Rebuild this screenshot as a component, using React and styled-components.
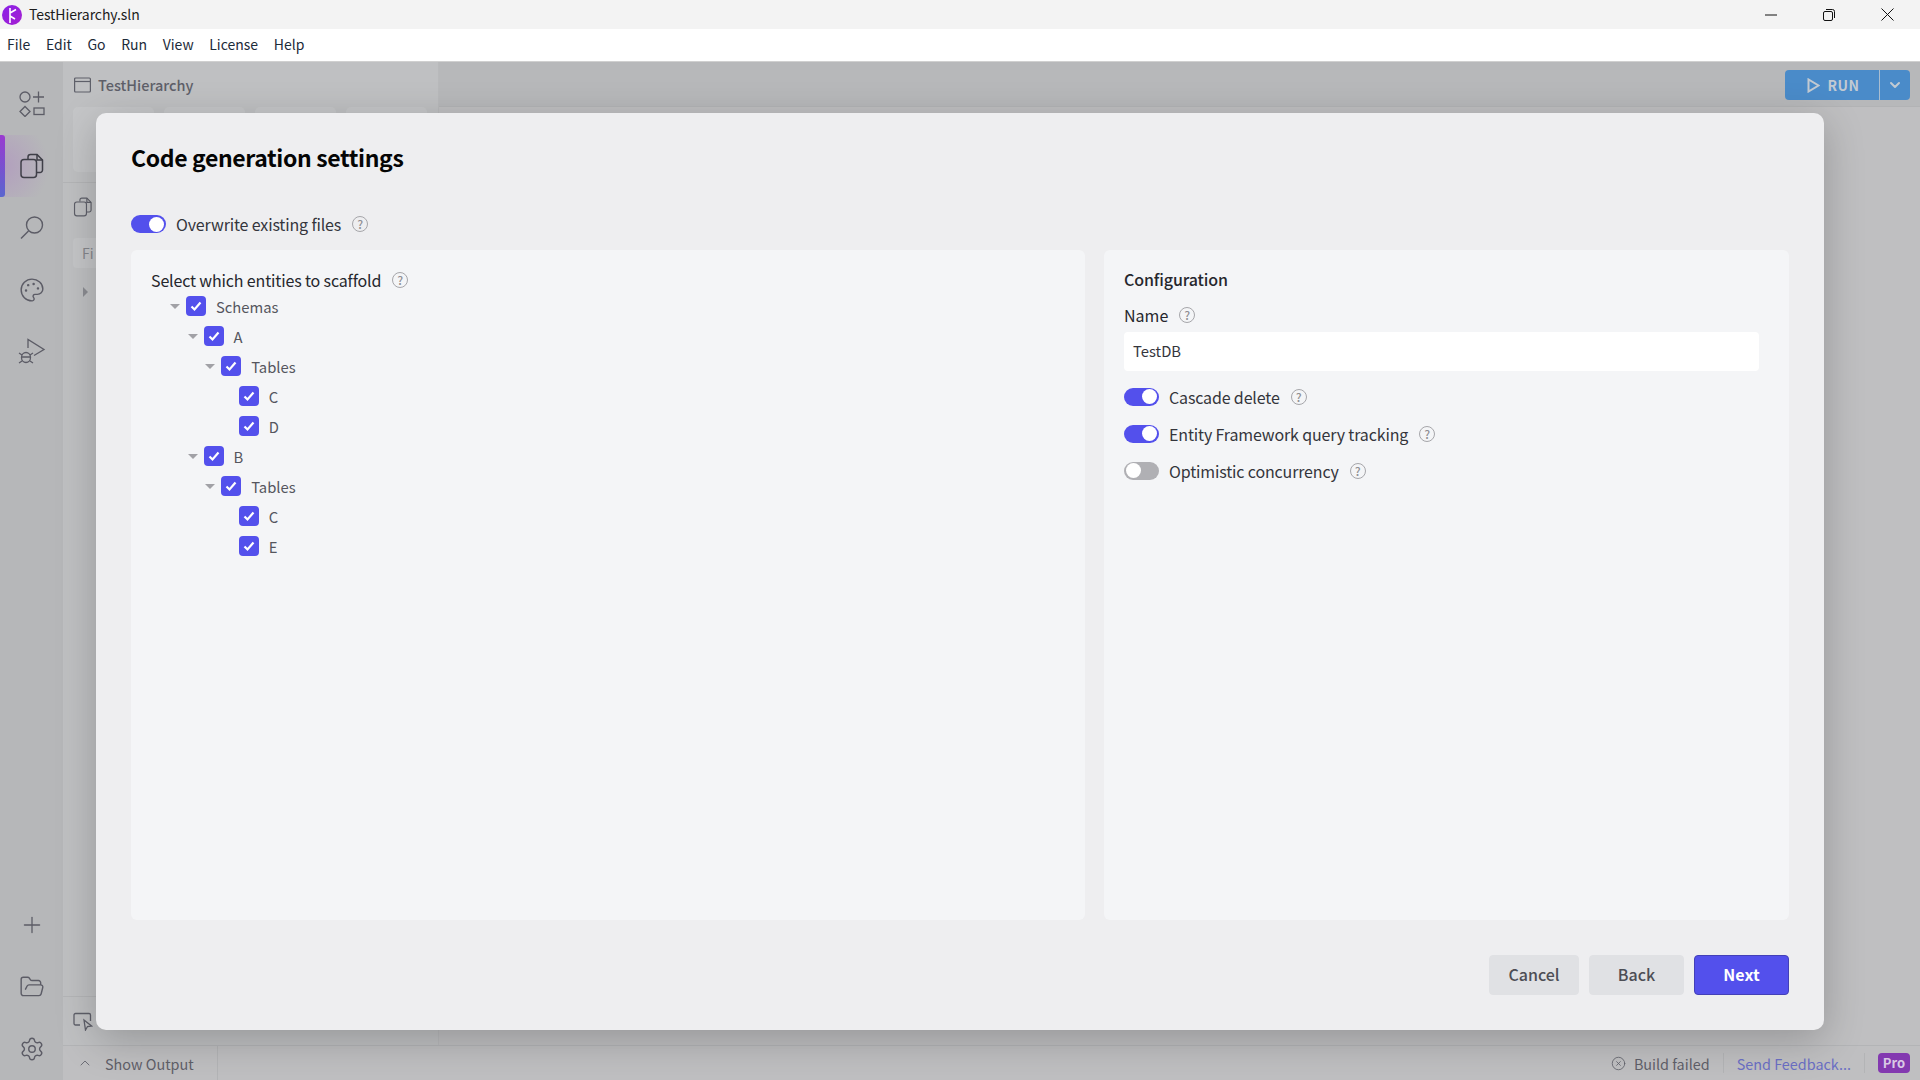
import styled, { createGlobalStyle } from 'styled-components';
import { ChevronDown, ChevronUp, FolderOpen, Palette, Plus, Settings, CircleX } from 'lucide-react';

const GlobalStyle = createGlobalStyle`
    html, body, #root{
        margin:0;
        height:100%;
    }
    body{
        font-family:"Noto Sans CJK SC","Noto Sans",sans-serif;
        overflow:hidden;
    }
    *{
        box-sizing:border-box;
    }
`

const Window = styled.div`
    width:1920px;
    height:1080px;
    display:flex;
    flex-direction:column;
    position:relative;
    overflow:hidden;
`

const TitleBar = styled.div`
    height:29px;
    flex:none;
    background-color:#f3f3f3;
    display:flex;
    align-items:center;
    padding:0 4px 0 2px;
    color:#1c1c1c;
    font-size:14px;
    letter-spacing:-.08px;
    & > span{
        margin:-2px 0 0 7px;
    }
`

const WindowButtons = styled.div`
    margin-left:auto;
    display:flex;
    align-items:center;
    color:#111;
`

const WindowButton = styled.div`
    width:58px;
    height:29px;
    display:flex;
    align-items:center;
    justify-content:center;
`

const MenuBar = styled.div`
    height:33px;
    flex:none;
    background-color:white;
    display:flex;
    align-items:center;
    padding:0 0 2px 7px;
    gap:15.600px;
    font-size:14px;
    color:#1d2b3a;
    border-bottom:1px solid #d0d0d0;
`

const Body = styled.div`
    flex:1;
    display:flex;
    min-height:0;
`

const Rail = styled.div`
    width:63px;
    flex:none;
    background-color:#b6b7b9;
    display:flex;
    flex-direction:column;
    align-items:center;
    padding:10.500px 0 0;
    color:#5c5c66;
`

const RailIcon = styled.div`
    width:63px;
    height:62px;
    flex:none;
    display:flex;
    align-items:center;
    justify-content:center;
    position:relative;
    ${p => p.$active && `
        background:radial-gradient(circle at 0 50%, rgba(170,110,200,.35), rgba(170,110,200,0) 70%);
        color:#3f3f48;
        &::before{
            content:'';
            position:absolute;
            left:0;
            top:0;
            width:5px;
            height:62px;
            border-radius:0 3px 3px 0;
            background:linear-gradient(180deg,#9a3ad0,#5a66cf);
        }
    `}
`

const RailSpacer = styled.div`
    flex:1;
`

const Workspace = styled.div`
    flex:1;
    min-width:0;
    display:flex;
    flex-direction:column;
`

const Panes = styled.div`
    flex:1;
    min-height:0;
    display:flex;
`

const Side = styled.div`
    width:376px;
    flex:none;
    background-color:#bfc0c2;
    border-right:1px solid #b8b9bb;
    display:flex;
    flex-direction:column;
`

const SideTitle = styled.div`
    height:45px;
    flex:none;
    display:flex;
    align-items:center;
    gap:7px;
    padding-left:11px;
    font-size:14.500px;
    font-weight:500;
    color:#5e5f69;
`

const CardRow = styled.div`
    display:flex;
    gap:10px;
    padding:0 10px;
    height:65px;
    flex:none;
`

const Card = styled.div`
    width:81px;
    background-color:#c5c6c8;
    border-radius:5px;
`

const SideSection = styled.div`
    flex:1;
    margin-top:10px;
    border-top:1px solid #b4b5b7;
    padding:14px 10px 0;
    color:#5e5f69;
    & > svg{
        display:block;
    }
`

const SideInput = styled.div`
    margin-top:21px;
    height:30px;
    border-radius:4px;
    background-color:#c5c6c8;
    padding-left:9px;
    line-height:30px;
    font-size:14px;
    color:#85868c;
`

const Caret = styled.div`
    width:0;
    height:0;
    margin:19px 0 0 10px;
    border-top:5px solid transparent;
    border-bottom:5px solid transparent;
    border-left:5px solid #8c8d92;
`

const SideFoot = styled.div`
    height:49px;
    flex:none;
    border-top:1px solid #b4b5b7;
    padding:14px 10px 0;
    color:#5e5f69;
`

const Main = styled.div`
    flex:1;
    display:flex;
    flex-direction:column;
    background-color:#bfbfc1;
`

const MainHeader = styled.div`
    height:45px;
    flex:none;
    background-color:#b7b8ba;
    border-bottom:1px solid #b2b3b5;
    display:flex;
    justify-content:flex-end;
    padding:8px 10px 0 0;
`

const RunButton = styled.div`
    width:125px;
    height:30px;
    border-radius:4px;
    background-color:#4a8bc9;
    color:#c2cad2;
    display:flex;
    font-size:14px;
    font-weight:700;
    letter-spacing:.5px;
`

const RunLabel = styled.div`
    flex:1;
    display:flex;
    align-items:center;
    justify-content:center;
    gap:7px;
    padding-left:3px;
    border-right:1px solid #a9bdd0;
`

const RunMore = styled.div`
    width:30px;
    display:flex;
    align-items:center;
    justify-content:center;
`

const StatusBar = styled.div`
    height:35px;
    flex:none;
    border-top:1px solid #b3b4b6;
    background-color:#bfbfc1;
    display:flex;
    align-items:center;
    font-size:14.400px;
    color:#5f6069;
`

const OutputToggle = styled.div`
    width:155px;
    height:100%;
    display:flex;
    align-items:center;
    gap:12px;
    padding-left:14px;
    border-right:1px solid #b3b4b6;
`

const StatusRight = styled.div`
    margin-left:auto;
    display:flex;
    align-items:center;
    height:100%;
    padding-right:10px;
`

const StatusItem = styled.div`
    display:flex;
    align-items:center;
    gap:8px;
    height:20px;
    padding:0 13px;
    border-right:1px solid #b3b4b6;
    color:${p => p.$link ? '#6b6fc4' : '#5f6069'};
`

const ProBadge = styled.div`
    margin-left:13px;
    width:32px;
    height:20px;
    border-radius:4px;
    background-color:#8339b0;
    color:#d9c9e4;
    font-size:13px;
    font-weight:700;
    line-height:19px;
    text-align:center;
`

const Modal = styled.div`
    position:absolute;
    left:96px;
    top:113px;
    width:1728px;
    height:917px;
    border-radius:10px;
    background-color:#eeeef0;
    box-shadow:0 10px 40px rgba(0,0,0,.22);
    padding:0 35px;
    display:flex;
    flex-direction:column;
`

const ModalTitle = styled.h2`
    margin:26px 0 1px;
    height:36px;
    font-size:23px;
    line-height:36px;
    font-weight:700;
    letter-spacing:-.37px;
    color:#050505;
`

const OptionRow = styled.div`
    height:${p => p.$height || 37}px;
    display:flex;
    align-items:center;
    font-size:16px;
    letter-spacing:-.15px;
    color:#34353c;
`

const TopOption = styled.div`
    margin-top:39px;
    margin-bottom:17px;
`

const Track = styled.div`
    width:35px;
    height:18px;
    border-radius:9px;
    flex:none;
    background-color:${p => p.$on ? '#5350ec' : '#b0b0b4'};
    margin-right:10px;
    position:relative;
    &::after{
        content:'';
        position:absolute;
        top:1.500px;
        left:${p => p.$on ? '18px' : '1.500px'};
        width:15px;
        height:15px;
        border-radius:50%;
        background-color:white;
    }
`

const HelpMark = styled.span`
    width:16px;
    height:16px;
    margin-left:11px;
    flex:none;
    border:1.500px solid #a6a6aa;
    border-radius:50%;
    color:#8f8f93;
    font-size:12px;
    font-weight:500;
    letter-spacing:0;
    line-height:13px;
    text-align:center;
`

const Columns = styled.div`
    flex:none;
    height:670px;
    display:flex;
    gap:19px;
`

const Panel = styled.div`
    background-color:#f4f5f7;
    border-radius:6px;
    padding:${p => p.$pad};
    ${p => p.$grow ? 'flex:1;' : 'width:685px;flex:none;'}
`

const PanelHead = styled.div`
    display:flex;
    align-items:center;
    height:24px;
    margin-top:1px;
    margin-bottom:-1px;
    font-size:16px;
    letter-spacing:-.15px;
    color:#26272d;
`

const TreeRow = styled.div`
    height:30px;
    display:flex;
    align-items:center;
    padding-left:${p => p.$depth * 17.6 + 19}px;
    font-size:14.800px;
    color:#55565e;
`

const TreeCaret = styled.span`
    width:0;
    height:0;
    flex:none;
    margin-right:6px;
    border-left:5px solid transparent;
    border-right:5px solid transparent;
    border-top:5px solid ${p => p.$hidden ? 'transparent' : '#a1a1a6'};
`

const Check = styled.span`
    width:20px;
    height:20px;
    flex:none;
    border-radius:4px;
    background-color:#5350ec;
    color:white;
    margin-right:10px;
    display:flex;
    align-items:center;
    justify-content:center;
`

const ConfigTitle = styled.div`
    height:27px;
    line-height:27px;
    font-size:16px;
    font-weight:500;
    letter-spacing:-.1px;
    color:#26272d;
`

const FieldLabel = styled.div`
    display:flex;
    align-items:center;
    height:28px;
    margin-top:8px;
    font-size:16px;
    color:#26272d;
`

const TextInput = styled.div`
    width:635px;
    height:39px;
    margin-top:3px;
    margin-bottom:7px;
    background-color:white;
    border-radius:4px;
    padding-left:9px;
    font-size:14.800px;
    line-height:38px;
    color:#34353c;
`

const Footer = styled.div`
    display:flex;
    justify-content:flex-end;
    gap:10px;
    margin-top:35px;
`

const Button = styled.div`
    width:${p => p.$width}px;
    height:40px;
    border-radius:4px;
    text-align:center;
    line-height:37px;
    font-size:16px;
    font-weight:${p => p.$primary ? 700 : 500};
    color:${p => p.$primary ? 'white' : '#4d4e55'};
    background-color:${p => p.$primary ? '#5350ec' : '#e0e1e4'};
    border:${p => p.$primary ? '1px solid #4340b8' : '1px solid #e0e1e4'};
`

const treeItems = [
    { depth: 0, label: 'Schemas' },
    { depth: 1, label: 'A' },
    { depth: 2, label: 'Tables' },
    { depth: 3, label: 'C', leaf: true },
    { depth: 3, label: 'D', leaf: true },
    { depth: 1, label: 'B' },
    { depth: 2, label: 'Tables' },
    { depth: 3, label: 'C', leaf: true },
    { depth: 3, label: 'E', leaf: true },
]

const Logo = () => (
    <svg width="20" height="20" viewBox="0 0 20 20">
        <defs>
            <linearGradient id="logo" x1="0" y1="0" x2="1" y2="1">
                <stop offset="0" stopColor="#8a22e8" />
                <stop offset="1" stopColor="#a51fd0" />
            </linearGradient>
        </defs>
        <circle cx="10" cy="10" r="10" fill="url(#logo)" />
        <path d="M8 3v15M8 8l6-3.500M8 11l5 3" stroke="white" strokeWidth="1.600" fill="none" />
    </svg>
)

const ShapesIcon = () => (
    <svg width="26" height="26" viewBox="0 0 26 26" fill="none" stroke="currentColor" strokeWidth="1.300">
        <circle cx="6" cy="6" r="5" />
        <path d="M14 6h11M19.500 .5v11" />
        <path d="M6 15.500l5 5-5 5-5-5z" />
        <rect x="15" y="17" width="10" height="6.500" />
    </svg>
)

const CopyIcon = ({ size = 26 }) => (
    <svg width={size} height={size} viewBox="0 0 26 26" fill="none" stroke="currentColor" strokeWidth="1.500">
        <path d="M9 6V4a2.500 2.500 0 0 1 2.500-2.500H18l5.500 5.500v10a2.500 2.500 0 0 1-2.500 2.500h-3" />
        <path d="M18 1.500V7h5.500" />
        <rect x="2" y="6.500" width="15.500" height="18" rx="3" />
    </svg>
)

const SearchIcon = () => (
    <svg width="26" height="26" viewBox="0 0 26 26" fill="none" stroke="currentColor" strokeWidth="1.400">
        <circle cx="15.500" cy="10" r="8" />
        <path d="M9.500 16L2 23.500" />
    </svg>
)

const DebugIcon = () => (
    <svg width="28" height="28" viewBox="0 0 28 28" fill="none" stroke="currentColor" strokeWidth="1.300">
        <path d="M10 10V1.500L26 11.500l-10 6" />
        <ellipse cx="8" cy="19.500" rx="4.500" ry="5" />
        <path d="M4 19h8M1 15l3 2M15 15l-3 2M1 25l3-2M15 25l-3-2" />
    </svg>
)

const CursorIcon = () => (
    <svg width="20" height="20" viewBox="0 0 20 20" fill="none" stroke="currentColor" strokeWidth="1.300">
        <path d="M7 14H2.500a1.500 1.500 0 0 1-1.500-1.500V4a1.500 1.500 0 0 1 1.500-1.500H16A1.500 1.500 0 0 1 17.500 4v6" />
        <path d="M11 9l1.500 10 2-3.500 4-.5z" />
    </svg>
)

const WindowIcon = () => (
    <svg width="17" height="16" viewBox="0 0 17 16" fill="none" stroke="currentColor" strokeWidth="1.200">
        <rect x=".6" y="1" width="15.800" height="14" rx="1" />
        <path d="M.6 4.500h15.800" />
    </svg>
)

const TinyCheck = () => (
    <svg width="12" height="12" viewBox="0 0 12 12" fill="none" stroke="currentColor" strokeWidth="2.200">
        <path d="M1.500 6.500L4.500 9.500 10.500 2.500" />
    </svg>
)

const Help = () => <HelpMark>?</HelpMark>

const App = () => {
    return (
        <Window>
            <GlobalStyle />
            <TitleBar>
                <Logo />
                <span>TestHierarchy.sln</span>
                <WindowButtons>
                    <WindowButton>
                        <svg width="12" height="2" viewBox="0 0 12 2"><path d="M0 1h12" stroke="currentColor" /></svg>
                    </WindowButton>
                    <WindowButton>
                        <svg width="12" height="12" viewBox="0 0 12 12" fill="none" stroke="currentColor">
                            <rect x=".5" y="2.500" width="9" height="9" rx="1.500" />
                            <path d="M3 .5h6.500a2 2 0 0 1 2 2V9" />
                        </svg>
                    </WindowButton>
                    <WindowButton>
                        <svg width="13" height="13" viewBox="0 0 13 13" stroke="currentColor"><path d="M.5.5l12 12M12.500.5l-12 12" /></svg>
                    </WindowButton>
                </WindowButtons>
            </TitleBar>
            <MenuBar>
                {['File', 'Edit', 'Go', 'Run', 'View', 'License', 'Help'].map(item => <span key={item}>{item}</span>)}
            </MenuBar>
            <Body>
                <Rail>
                    <RailIcon><ShapesIcon /></RailIcon>
                    <RailIcon $active><CopyIcon /></RailIcon>
                    <RailIcon><SearchIcon /></RailIcon>
                    <RailIcon><Palette size={26} strokeWidth={1.3} /></RailIcon>
                    <RailIcon><DebugIcon /></RailIcon>
                    <RailSpacer />
                    <RailIcon><Plus size={26} strokeWidth={1.2} /></RailIcon>
                    <RailIcon><FolderOpen size={26} strokeWidth={1.3} /></RailIcon>
                    <RailIcon><Settings size={26} strokeWidth={1.3} /></RailIcon>
                </Rail>
                <Workspace>
                    <Panes>
                        <Side>
                            <SideTitle><WindowIcon />TestHierarchy</SideTitle>
                            <CardRow>
                                <Card /><Card /><Card /><Card />
                            </CardRow>
                            <SideSection>
                                <CopyIcon size={20} />
                                <SideInput>Fi</SideInput>
                                <Caret />
                            </SideSection>
                            <SideFoot><CursorIcon /></SideFoot>
                        </Side>
                        <Main>
                            <MainHeader>
                                <RunButton>
                                    <RunLabel>
                                        <svg width="13" height="15" viewBox="0 0 13 15" fill="none" stroke="currentColor" strokeWidth="2"><path d="M1.500 1.500v12l10-6z" /></svg>
                                        RUN
                                    </RunLabel>
                                    <RunMore><ChevronDown size={16} strokeWidth={3} /></RunMore>
                                </RunButton>
                            </MainHeader>
                        </Main>
                    </Panes>
                    <StatusBar>
                        <OutputToggle><ChevronUp size={16} strokeWidth={1.3} />Show Output</OutputToggle>
                        <StatusRight>
                            <StatusItem><CircleX size={15} strokeWidth={1.3} />Build failed</StatusItem>
                            <StatusItem $link>Send Feedback...</StatusItem>
                            <ProBadge>Pro</ProBadge>
                        </StatusRight>
                    </StatusBar>
                </Workspace>
            </Body>
            <Modal>
                <ModalTitle>Code generation settings</ModalTitle>
                <TopOption>
                    <OptionRow $height={18}>
                        <Track $on />Overwrite existing files<Help />
                    </OptionRow>
                </TopOption>
                <Columns>
                    <Panel $grow $pad="17px 20px">
                        <PanelHead>Select which entities to scaffold<Help /></PanelHead>
                        {treeItems.map((item, i) => (
                            <TreeRow key={i} $depth={item.depth}>
                                <TreeCaret $hidden={item.leaf} />
                                <Check><TinyCheck /></Check>
                                {item.label}
                            </TreeRow>
                        ))}
                    </Panel>
                    <Panel $pad="16px 20px">
                        <ConfigTitle>Configuration</ConfigTitle>
                        <FieldLabel>Name<Help /></FieldLabel>
                        <TextInput>TestDB</TextInput>
                        <OptionRow><Track $on />Cascade delete<Help /></OptionRow>
                        <OptionRow><Track $on />Entity Framework query tracking<Help /></OptionRow>
                        <OptionRow><Track />Optimistic concurrency<Help /></OptionRow>
                    </Panel>
                </Columns>
                <Footer>
                    <Button $width={90}>Cancel</Button>
                    <Button $width={95}>Back</Button>
                    <Button $width={95} $primary>Next</Button>
                </Footer>
            </Modal>
        </Window>
    )
}

export default App
